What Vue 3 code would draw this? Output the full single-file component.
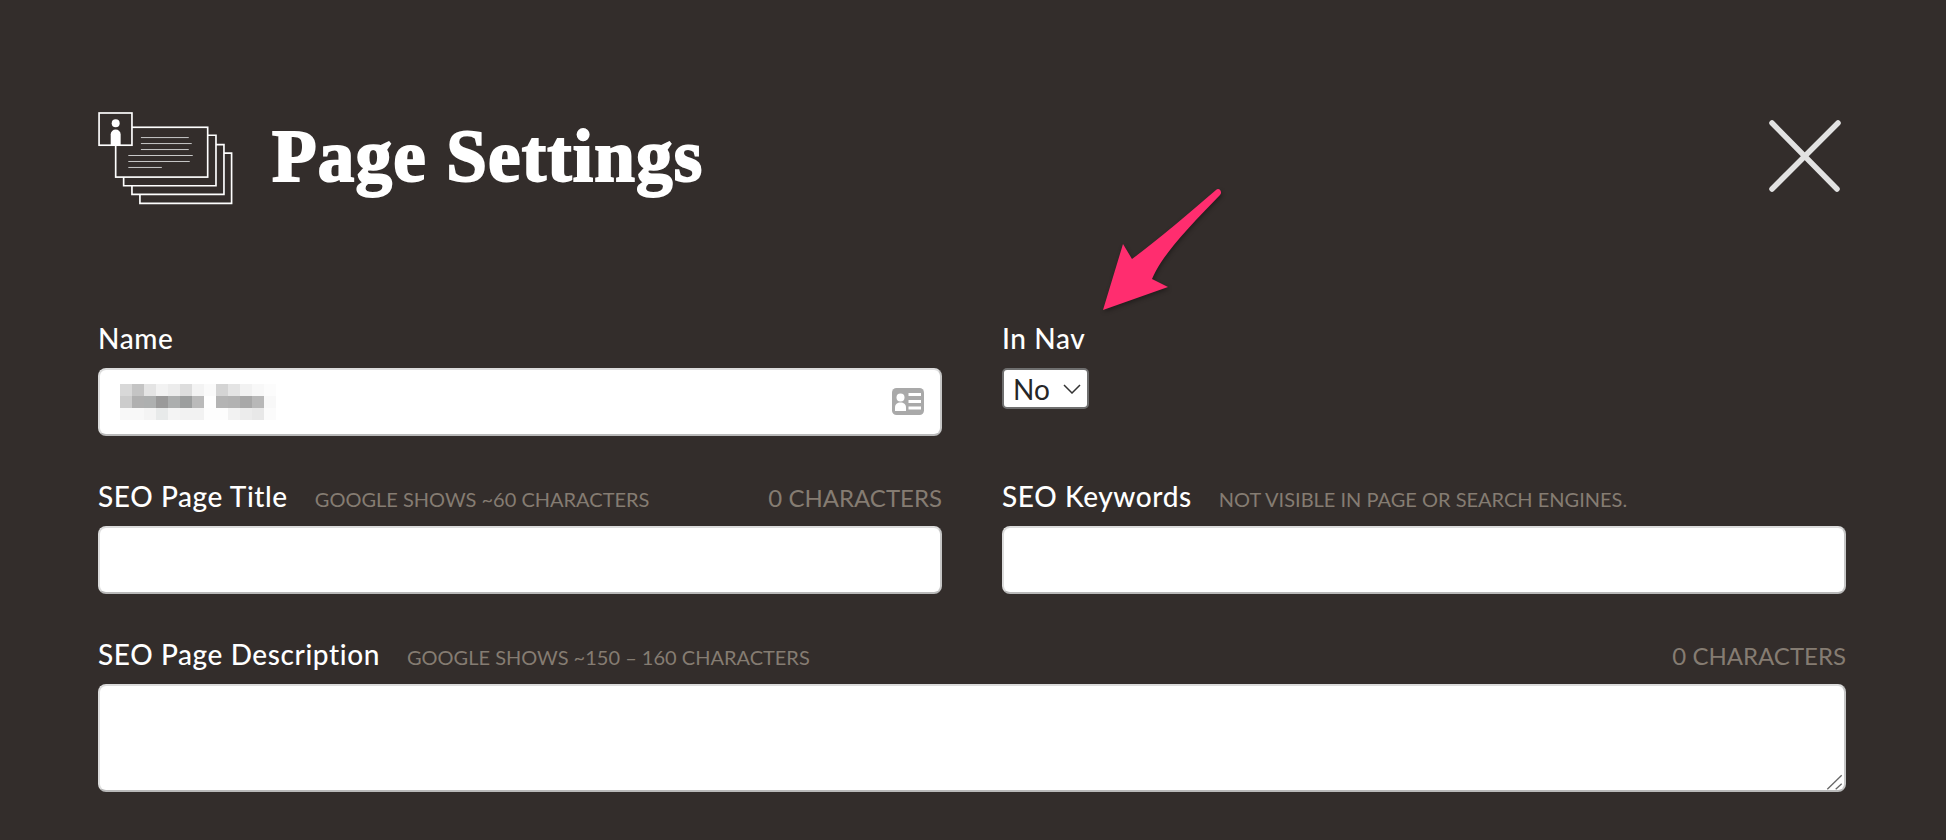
<template>
  <div class="page">
    <header class="page-header">
      <div class="title-wrap">
        <svg class="stack-icon" viewBox="22 20 406 280" width="135" height="93" fill="none" stroke="#fff" stroke-width="5">
          <path d="M148 268V295H424V144H401" />
          <path d="M124 242V268H401V118H377" />
          <path d="M99 216V242H377V90H352" />
          <rect x="75" y="66" width="277" height="150" fill="#332d2b" />
          <rect x="25" y="23" width="99" height="97" fill="#332d2b" />
          <circle cx="75" cy="54" r="12" fill="#fff" stroke="none" />
          <path d="M60 120V88a15 15 0 0 1 30 0V120Z" fill="#fff" stroke="none" />
          <g stroke-width="3" stroke="#c9c9c9">
            <path d="M151 97H295" />
            <path d="M151 115H304" />
            <path d="M151 133H295" />
            <path d="M113 151H307" />
            <path d="M113 169H298" />
            <path d="M113 187H214" />
          </g>
        </svg>
        <h1>Page Settings</h1>
      </div>
      <button class="close-btn" type="button" aria-label="Close">
        <svg viewBox="0 0 75 75" width="75" height="75" stroke="#e2e2e2" stroke-width="5.5" stroke-linecap="round">
          <path d="M5 4L70 70" />
          <path d="M71 4L5 70" />
        </svg>
      </button>
    </header>

    <form class="settings-form" @submit.prevent>
      <div class="field">
        <div class="field-head"><label>Name</label></div>
        <div class="input-wrap">
          <input type="text" />
          <div class="pixel-blur" aria-hidden="true">
            <template v-for="(row, r) in blurRows" :key="r">
              <i v-for="(shade, c) in row" :key="c" :style="{ background: shade }"></i>
            </template>
          </div>
          <svg class="card-icon" viewBox="0 0 32 27" width="32" height="27">
            <rect width="32" height="27" rx="4.5" fill="#a9a9a9" />
            <circle cx="8.5" cy="9.5" r="4" fill="#fff" />
            <path d="M3 23v-3.5c0-3.2 2.4-5 5.500-5s5.500 1.800 5.500 5V23Z" fill="#fff" />
            <path d="M16.500 6.500H29M16.500 13.500H29M16.500 20H29" stroke="#fff" stroke-width="2.800" />
          </svg>
        </div>
      </div>

      <div class="field">
        <div class="field-head"><label>In Nav</label></div>
        <div class="select-wrap">
          <select>
            <option>No</option>
            <option>Yes</option>
          </select>
          <svg class="chevron" viewBox="0 0 18 10" width="18" height="10" fill="none" stroke="#333" stroke-width="1.500">
            <path d="M1 1L9 9L17 1" />
          </svg>
        </div>
      </div>

      <div class="field">
        <div class="field-head">
          <label>SEO Page Title</label>
          <span class="hint">GOOGLE SHOWS ~60 CHARACTERS</span>
          <span class="count">0 CHARACTERS</span>
        </div>
        <input type="text" />
      </div>

      <div class="field">
        <div class="field-head">
          <label>SEO Keywords</label>
          <span class="hint">NOT VISIBLE IN PAGE OR SEARCH ENGINES.</span>
        </div>
        <input type="text" />
      </div>

      <div class="field wide">
        <div class="field-head">
          <label>SEO Page Description</label>
          <span class="hint">GOOGLE SHOWS ~150 – 160 CHARACTERS</span>
          <span class="count">0 CHARACTERS</span>
        </div>
        <div class="input-wrap">
          <textarea></textarea>
          <svg class="grip" viewBox="0 0 18 18" width="18" height="18" fill="none" stroke="#666" stroke-width="1.300">
            <path d="M1.300 16.300L15.700 2.300" />
            <path d="M9.700 16.300L15.700 10.700" />
          </svg>
        </div>
      </div>
    </form>

    <svg class="arrow" viewBox="0 0 130 134" width="130" height="134">
      <path
        d="M6 127L26 61L35 76C62 56 92 30 119 7C122 4 126 9 123 12C96 40 66 70 55 96L71 104Z"
        fill="#ff2d6f"
      />
    </svg>
  </div>
</template>

<script setup>
const blurRows = [
  ['#d8d8d8', '#c4c4c4', '#e4e4e4', '#f2f2f2', '#ececec', '#dddddd', '#f3f3f3', '#fafafa', '#d4d4d4', '#e4e4e4', '#f2f2f2', '#f8f8f8', '#fcfcfc'],
  ['#cccccc', '#b0b0b0', '#aeb0b0', '#9a9a9a', '#acaeae', '#9c9e9e', '#bababa', '#fefefe', '#b4b4b4', '#b2b2b2', '#a8a8a8', '#b8b8b8', '#f8f8f8'],
  ['#f8f8f8', '#f8f8f8', '#f4f4f4', '#e8eaea', '#f4f4f4', '#f2f2f2', '#f2f2f2', '#fdfdfd', '#fdfdfd', '#f2f2f2', '#ececec', '#e8e8e8', '#fbfbfb']
]
</script>

<style>
html,
body {
  margin: 0;
  background: #332d2b;
}
</style>

<style scoped>
.page {
  position: relative;
  box-sizing: border-box;
  height: 840px;
  overflow: hidden;
  padding: 96px 100px 0 98px;
  background: #332d2b;
  font-family: Lato, "Open Sans", sans-serif;
  color: #fff;
}

.page-header {
  display: flex;
  justify-content: space-between;
  align-items: center;
  height: 120px;
  margin-bottom: 112px;
}

.title-wrap {
  display: flex;
  align-items: center;
  gap: 39px;
}

.stack-icon {
  margin-top: 4px;
}

h1 {
  margin: 0;
  font-family: "Liberation Serif", serif;
  font-size: 73px;
  font-weight: 700;
  line-height: 1;
  letter-spacing: 1.2px;
  -webkit-text-stroke: 2px #fff;
}

.close-btn {
  display: flex;
  margin-right: 4px;
  padding: 0;
  border: 0;
  background: none;
  cursor: pointer;
}

.settings-form {
  display: grid;
  grid-template-columns: 844px 844px;
  column-gap: 60px;
  row-gap: 50px;
}

.field.wide {
  grid-column: 1 / -1;
}

.field-head {
  display: flex;
  align-items: baseline;
  height: 40px;
  line-height: 20px;
}

label {
  font-size: 28px;
  font-weight: 500;
  letter-spacing: 0.6px;
}

.hint {
  margin-left: 27px;
  font-size: 20px;
  color: #857c72;
}

.count {
  margin-left: auto;
  font-size: 24px;
  color: #857c72;
}

input,
textarea {
  display: block;
  box-sizing: border-box;
  width: 100%;
  margin: 0;
  background: #fff;
  border: 2px solid #dcdcdc;
  border-right-color: #c6c6c6;
  border-bottom-color: #b9b9b9;
  border-radius: 8px;
  outline: none;
}

input {
  height: 68px;
}

textarea {
  height: 108px;
  resize: none;
}

.input-wrap {
  position: relative;
}

.pixel-blur {
  position: absolute;
  top: 16px;
  left: 22px;
  display: grid;
  grid-template-columns: repeat(13, 12px);
  grid-auto-rows: 12px;
}

.card-icon {
  position: absolute;
  top: 20px;
  right: 18px;
}

.grip {
  position: absolute;
  right: 2px;
  bottom: 1px;
  pointer-events: none;
}

.select-wrap {
  position: relative;
  width: 87px;
}

select {
  display: block;
  box-sizing: border-box;
  width: 100%;
  height: 41px;
  padding: 0 0 0 9px;
  appearance: none;
  background: #fff;
  border: 2px solid #6f6f6f;
  border-radius: 5px;
  color: #262626;
  font-family: inherit;
  font-size: 28px;
}

.chevron {
  position: absolute;
  top: 16px;
  right: 8px;
  pointer-events: none;
}

.arrow {
  position: absolute;
  top: 183px;
  left: 1097px;
  filter: drop-shadow(1px 2px 2px rgba(0, 0, 0, 0.35));
}
</style>
